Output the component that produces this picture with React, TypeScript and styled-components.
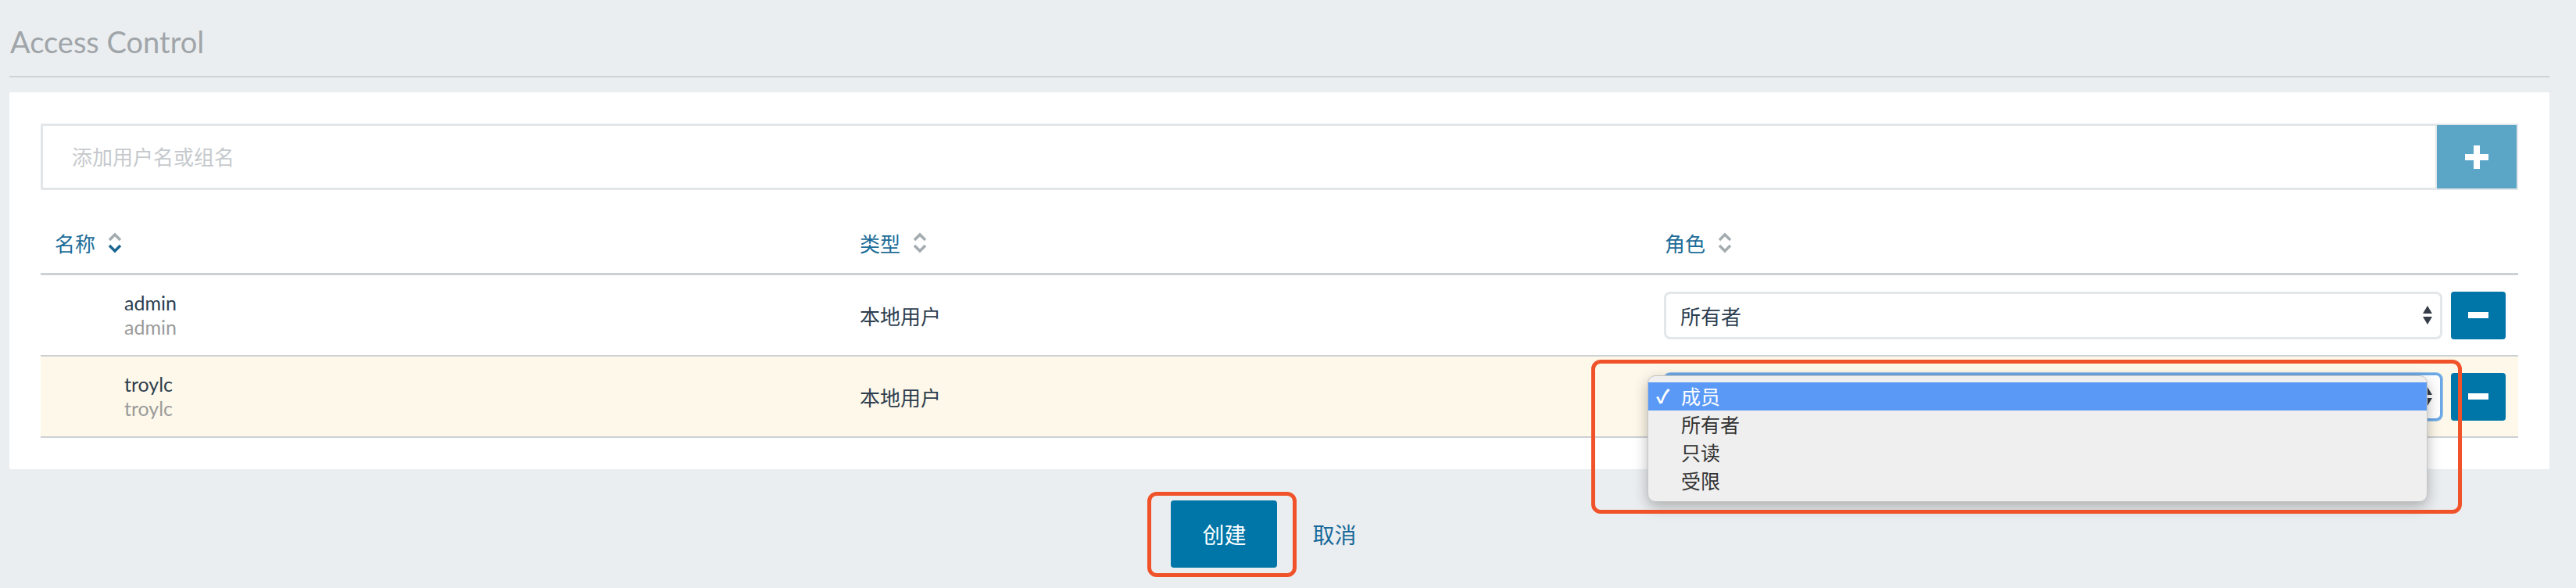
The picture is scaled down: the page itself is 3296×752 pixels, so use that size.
import * as React from "react";
import styled, { createGlobalStyle } from "styled-components";

const GlobalStyle = createGlobalStyle`
  html, body {
    margin: 0;
    padding: 0;
    background: #ebeef0;
  }
  body {
    font-family: Lato, "Noto Sans CJK SC", sans-serif;
    color: #2d3e4f;
  }
`;

const FONT = `Lato, "Noto Sans CJK SC", sans-serif`;

const Page = styled.div`
  position: relative;
  width: 3296px;
  height: 752px;
  box-sizing: border-box;
  padding: 0 34px 0 12px;
  font-family: ${FONT};
`;

const Title = styled.h1`
  margin: 0;
  padding: 30px 0 21px 1px;
  font-size: 38px;
  line-height: 46px;
  font-weight: 400;
  color: #a0a5a9;
  border-bottom: 2px solid #cfd3d5;
`;

const Panel = styled.div`
  margin-top: 19px;
  background: #fff;
  border-radius: 2px;
  padding: 40px;
`;

const SearchRow = styled.div`
  display: flex;
  height: 85px;
`;

const SearchInput = styled.input`
  flex: 1;
  box-sizing: border-box;
  height: 85px;
  border: 3px solid #e3e6e8;
  border-right: 0;
  border-radius: 3px 0 0 3px;
  padding: 0 37px;
  font-family: ${FONT};
  font-size: 26px;
  color: #2d3e4f;
  outline: none;
  &::placeholder {
    color: #c5c9cd;
  }
`;

const AddButton = styled.button`
  width: 106px;
  height: 85px;
  box-sizing: border-box;
  border: 2px solid #e3e6e8;
  background: #5ba5c7;
  display: flex;
  align-items: center;
  justify-content: center;
  padding: 0;
`;

const Table = styled.div`
  margin-top: 38px;
`;

const Grid = styled.div<{ $bg?: string; $line: number; $height: number }>`
  display: grid;
  grid-template-columns: 1030px 1030px 1fr;
  align-items: center;
  height: ${({ $height }) => $height}px;
  background: ${({ $bg }) => $bg || "transparent"};
  border-bottom: ${({ $line }) => $line}px solid #cdd1d4;
`;

const HeadCell = styled.div`
  display: flex;
  align-items: center;
  gap: 16px;
  padding: 0 18px 10px;
  font-size: 26px;
  color: #1d6d99;
`;

const Cell = styled.div`
  position: relative;
  display: flex;
  align-items: center;
  padding: 0 18px;
  font-size: 26px;
  color: #2d3e4f;
`;

const Avatar = styled.div`
  width: 71px;
  height: 60px;
  margin-right: 18px;
`;

const Names = styled.div`
  display: flex;
  flex-direction: column;
  font-size: 25px;
  line-height: 31px;
`;

const SubName = styled.span`
  color: #9b9b9b;
`;

const RoleCell = styled(Cell)`
  gap: 11px;
  padding: 0 16px 0 17px;
`;

const SelectBox = styled.div<{ $focus?: boolean }>`
  flex: 1;
  height: 61px;
  box-sizing: border-box;
  display: flex;
  align-items: center;
  justify-content: space-between;
  padding: 0 10px 0 18px;
  border: 3px solid ${({ $focus }) => ($focus ? "#6aa8e6" : "#e4e7e9")};
  border-radius: 8px;
  background: #fff;
  box-shadow: ${({ $focus }) =>
    $focus ? "0 0 0 1px rgba(96, 160, 228, 0.6)" : "none"};
  font-size: 26px;
`;

const RemoveButton = styled.button`
  width: 70px;
  height: 61px;
  border: 0;
  border-radius: 4px;
  background: #0076a8;
  display: flex;
  align-items: center;
  justify-content: center;
  padding: 0;
`;

const Menu = styled.div`
  position: absolute;
  left: -4px;
  top: 3px;
  width: 998px;
  box-sizing: border-box;
  padding: 8px 0;
  background: #efefef;
  border: 1px solid #c4c4c4;
  border-radius: 10px;
  box-shadow: 0 6px 18px rgba(0, 0, 0, 0.28);
  z-index: 2;
`;

const MenuItem = styled.div<{ $selected?: boolean }>`
  position: relative;
  height: 36px;
  line-height: 36px;
  padding-left: 42px;
  font-size: 25px;
  color: ${({ $selected }) => ($selected ? "#fff" : "#333")};
  background: ${({ $selected }) => ($selected ? "#5a9af6" : "transparent")};
`;

const Check = styled.span`
  position: absolute;
  left: 10px;
  top: 0;
  font-size: 24px;
  font-weight: 700;
`;

const Footer = styled.div`
  margin-top: 40px;
  display: flex;
  justify-content: center;
  align-items: center;
  gap: 45px;
`;

const PrimaryButton = styled.button`
  width: 136px;
  height: 86px;
  border: 0;
  border-radius: 4px;
  background: #0076a8;
  color: #fff;
  font-family: ${FONT};
  font-size: 28px;
`;

const CancelLink = styled.a`
  padding-right: 40px;
  font-size: 28px;
  color: #17699a;
`;

const Highlight = styled.div`
  position: absolute;
  box-sizing: border-box;
  border: 5px solid #f0532a;
  border-radius: 12px;
  pointer-events: none;
  z-index: 3;
`;

function SortIcon({ active }: { active?: boolean }) {
  return (
    <svg width="18" height="27" viewBox="0 0 18 27">
      <polyline points="2,10 9,3 16,10" fill="none" stroke="#a4abaf" strokeWidth="3.5" />
      <polyline
        points="2,17 9,24 16,17"
        fill="none"
        stroke={active ? "#1b6690" : "#a4abaf"}
        strokeWidth="3.5"
      />
    </svg>
  );
}

function SelectArrows() {
  return (
    <svg width="12" height="24" viewBox="0 0 12 24">
      <polygon points="6,0 12,10 0,10" fill="#363d48" />
      <polygon points="0,14 12,14 6,24" fill="#363d48" />
    </svg>
  );
}

const members = [
  { name: "admin", type: "本地用户", role: "所有者" },
  { name: "troylc", type: "本地用户", role: "成员" },
];

const roles = ["成员", "所有者", "只读", "受限"];

export default function App() {
  return (
    <Page>
      <GlobalStyle />
      <Title>Access Control</Title>
      <Panel>
        <SearchRow>
          <SearchInput placeholder="添加用户名或组名" />
          <AddButton>
            <svg width="30" height="30" viewBox="0 0 30 30">
              <rect x="11" y="0" width="8" height="30" fill="#fff" />
              <rect x="0" y="11" width="30" height="8" fill="#fff" />
            </svg>
          </AddButton>
        </SearchRow>
        <Table>
          <Grid $line={3} $height={68}>
            <HeadCell>
              名称 <SortIcon active />
            </HeadCell>
            <HeadCell>
              类型 <SortIcon />
            </HeadCell>
            <HeadCell>
              角色 <SortIcon />
            </HeadCell>
          </Grid>
          {members.map((m, i) => {
            const open = i === 1;
            return (
              <Grid key={m.name} $line={2} $height={102} $bg={open ? "#fdf8e9" : "#fff"}>
                <Cell>
                  <Avatar />
                  <Names>
                    <span>{m.name}</span>
                    <SubName>{m.name}</SubName>
                  </Names>
                </Cell>
                <Cell>{m.type}</Cell>
                <RoleCell>
                  <SelectBox $focus={open}>
                    <span>{open ? "" : m.role}</span>
                    <SelectArrows />
                  </SelectBox>
                  <RemoveButton>
                    <svg width="26" height="8" viewBox="0 0 26 8">
                      <rect width="26" height="8" fill="#fff" />
                    </svg>
                  </RemoveButton>
                  {open && (
                    <Menu>
                      {roles.map((r) => (
                        <MenuItem key={r} $selected={r === m.role}>
                          {r === m.role && <Check>✓</Check>}
                          {r}
                        </MenuItem>
                      ))}
                    </Menu>
                  )}
                </RoleCell>
              </Grid>
            );
          })}
        </Table>
      </Panel>
      <Footer>
        <PrimaryButton>创建</PrimaryButton>
        <CancelLink>取消</CancelLink>
      </Footer>
      <Highlight style={{ left: 2036, top: 460, width: 1114, height: 197 }} />
      <Highlight style={{ left: 1468, top: 629, width: 191, height: 109 }} />
    </Page>
  );
}
